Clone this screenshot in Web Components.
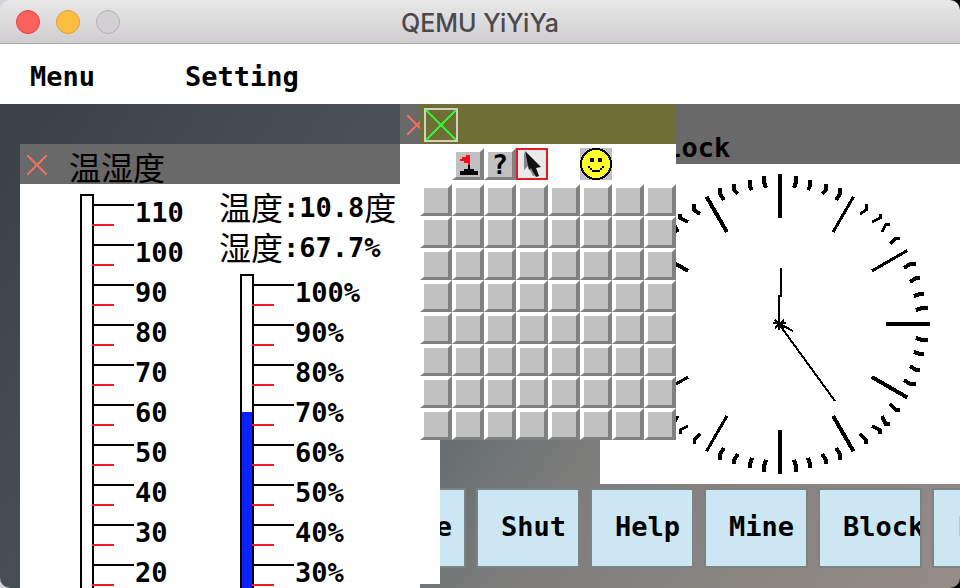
<!DOCTYPE html>
<html lang="zh">
<head>
<meta charset="utf-8">
<title>QEMU YiYiYa</title>
<style>
html, body { margin: 0; height: 100%; overflow: hidden; }
body {
  background: linear-gradient(90deg, #d4d4da 50%, #000 50%);
  font: bold 27px/40px "DejaVu Sans Mono", "Liberation Mono", "Noto Sans CJK SC", monospace;
  color: #000;
}
</style>
</head>
<body>
<vm-window></vm-window>
<script>
const define = (name, html, setup) => customElements.define(name, class extends HTMLElement {
  connectedCallback() {
    if (this.shadowRoot) return;
    const root = this.attachShadow({ mode: "open" });
    root.innerHTML = typeof html === "function" ? html(this) : html;
    if (setup) setup(root, this);
  }
});

define("title-bar", `
<style>
:host { display: grid; grid-template-columns: 1fr auto 1fr; align-items: center; height: 43px;
  background: linear-gradient(#e9e8e9, #cfcdcf); border-bottom: 1px solid #aaa8aa; }
.lights { display: flex; gap: 16px; padding-left: 16px; }
button { width: 24px; height: 24px; padding: 0; border-radius: 50%; border: 1px solid #e0443e; background: #fc615d; }
button.min { border-color: #dea034; background: #fdbd40; }
button.max { border-color: #b4b2b4; background: #d2d0d2; }
h1 { margin: 0; padding-top: 2px; font: 500 25px/30px Inter, Roboto, sans-serif; color: #4b494b; }
</style>
<div class="lights"><button aria-label="Close"></button><button class="min" aria-label="Minimize"></button><button class="max" aria-label="Zoom" disabled></button></div>
<h1><slot></slot></h1>`);

define("menu-bar", `
<style>
:host { display: block; background: #fff; }
nav { display: flex; gap: 90px; height: 60px; padding: 0 30px; align-items: center; }
button { all: unset; line-height: 32px; padding-top: 6px; }
</style>
<nav><button>Menu</button><button>Setting</button></nav>`);

define("desk-window", `
<style>
:host { display: flex; flex-direction: column; position: absolute; background: #fff; overflow: hidden; }
header { display: flex; align-items: center; height: 40px; padding-top: var(--lead, 0px); background: #696969; flex: none; }
button { all: unset; display: flex; width: 20px; padding: 2px 22px 0 7px; flex: none; }
svg { width: 20px; height: 20px; }
h2 { margin: 0; padding-top: 8px; font: inherit; line-height: 32px; white-space: nowrap; }
</style>
<header><button aria-label="Close"><svg viewBox="0 0 10 10" shape-rendering="crispEdges"><path d="M0 0L10 10M10 0L0 10" stroke="#e8705c" stroke-width="1"/></svg></button>
<h2><slot name="title"></slot></h2></header>
<slot></slot>`);

define("scale-meter", el => {
  const unit = el.getAttribute("unit") || "";
  let rows = "";
  for (let v = +el.getAttribute("max"); v >= +el.getAttribute("min"); v -= 10)
    rows += `<li><i></i><span>${v}${unit}</span></li>`;
  return `
<style>
:host { display: flex; }
.tube { width: 10px; border: 2px solid #000; background: linear-gradient(#fff var(--empty, 100%), #0a22ff 0); }
ul { list-style: none; margin: 0; padding: 0; }
li { display: flex; height: 40px; }
i { width: 40px; margin-right: 1px; border-top: 2px solid #000; margin-top: 10px; position: relative; }
i::after { content: ""; position: absolute; left: -2px; top: 18px; width: 22px; height: 2px; background: #ee1c2a; }
span { line-height: 38px; }
</style>
<div class="tube"></div><ul>${rows}</ul>`;
});

define("climate-panel", `
<style>
:host { display: grid; grid-template-columns: 139px 1fr; padding: 4px 0 0 60px; align-items: start; }
p { display: flex; margin: 0; height: 40px; line-height: 40px; white-space: nowrap; }
b { font: 400 32px/36px "Noto Sans CJK SC", sans-serif; }
.temp { margin-top: 6px; }
.humid { margin: 6px 0 0 21px; --empty: 136px; }
</style>
<scale-meter class="temp" max="110" min="20"></scale-meter>
<div><p><b>温度</b>:10.8<b>度</b></p><p><b>湿度</b>:67.7%</p>
<scale-meter class="humid" max="100" min="30" unit="%"></scale-meter></div>`);

define("mine-field", `
<style>
:host { display: block; position: absolute; background: #fff; }
header { height: 40px; background: #6f6e35; display: flex; box-sizing: border-box; padding: 4px; }
button { all: unset; box-sizing: border-box; width: 32px; height: 32px; background: #c0c0c0;
  border: 4px solid; border-color: #fff #808080 #808080 #fff; border-bottom-width: 3px; }
header button { width: 34px; height: 34px; border: 2px solid #cfd0c0; background: none; display: flex; }
header svg { width: 30px; height: 30px; }
.tools { display: flex; height: 40px; align-items: center; padding-left: 32px; }
.tools button { display: flex; }
.tools svg { width: 24px; height: 25px; }
.tools .pick { border: 2px solid #e01b24; background: #e9e9e9; }
.tools .pick svg { width: 28px; height: 28px; }
.tools .face { border: 0; margin-left: 32px; }
.tools .face svg { width: 32px; height: 32px; }
.q { font-size: 27px; line-height: 25px; justify-content: center; }
.grid { display: grid; grid-template-columns: repeat(8, 32px); }
</style>
<header><button aria-label="Close"><svg viewBox="0 0 15 15" shape-rendering="crispEdges"><path d="M0 0L15 15M15 0L0 15" stroke="#35f035"/></svg></button></header>
<div class="tools">
<button aria-label="Flag"><svg viewBox="0 0 24 25" shape-rendering="crispEdges"><path d="M4 7h2V5h4V3h4v10h-2v-2H8V9H4z" fill="#fa0a1e"/><path d="M12 13h2v4h4v2h4v4H4v-4h4v-2h4z"/></svg></button>
<button class="q" aria-label="Question mark">?</button>
<button class="pick" aria-label="Pointer"><svg viewBox="0 0 28 28"><path d="M6 2v18l4-4 5 10 3-1-4-10z" fill="#858585"/><path d="M7 1l16 16-5 1 3 8-3 1-5-9-2 2z" fill="#111"/></svg></button>
<button class="face" aria-label="New game"><svg viewBox="0 0 32 32" shape-rendering="crispEdges"><circle cx="16" cy="16" r="15" fill="#ffff2d" stroke="#000" stroke-width="2"/><path d="M10 10h4v4h-4zM18 10h4v4h-4zM8 18h2v2H8zM22 18h2v2h-2zM10 20h2v2h-2zM20 20h2v2h-2zM12 22h8v2h-8z"/></svg></button>
</div>
<div class="grid"></div>`, root => {
  root.querySelector(".grid").innerHTML = Array.from({ length: 64 }, (_, i) =>
    `<button aria-label="Row ${(i >> 3) + 1}, column ${i % 8 + 1}"></button>`).join("");
});

define("clock-face", () => {
  let ticks = "";
  for (let i = 0; i < 60; i++) {
    const a = i * Math.PI / 30, s = Math.sin(a), c = -Math.cos(a);
    const r0 = i % 5 ? 136 : 106, r1 = i % 5 ? 148 : i % 15 ? 147 : 150;
    const thin = (i > 4 && i < 11) || (i > 34 && i < 41);
    if (i % 5) {
      // Minor marks are steep near the top and bottom, flat at the sides, with a stepped inner end.
      const x1 = Math.round(s * r1 / 2) * 2, y1 = Math.round(c * r1 / 2) * 2;
      const x0 = Math.round(s * r0 / 2) * 2, y0 = Math.round(c * r0 / 2) * 2;
      const steep = Math.abs(c) > Math.abs(s);
      const mx = steep ? x1 : Math.round((x0 + x1) / 4) * 2;
      const my = steep ? Math.round((y0 + y1) / 4) * 2 : y1;
      ticks += `<path d="M${x0} ${y0}L${mx} ${my}L${x1} ${y1}" stroke-width="${thin ? 3 : 4}"/>`;
    } else {
      ticks += `<path d="M${s * r0} ${c * r0}L${s * r1} ${c * r1}" stroke-width="${thin ? 3 : 4}"/>`;
    }
  }
  return `
<style>
:host { display: block; }
svg { display: block; width: 320px; height: 320px; margin-left: 20px; }
</style>
<svg viewBox="-160 -160 320 320" shape-rendering="crispEdges" role="img" aria-label="Clock" stroke="#000" fill="none">${ticks}
<path d="M-1 0V-28H1V-56M-1 0L55 77M0 0L13 7M-7 -1H6M-1 -5V6M-5 -4L4 5M4 -4L-5 4" stroke-width="2"/></svg>`;
});

define("app-dock", `
<style>
:host { display: flex; gap: 10px; padding: 0 0 20px 362px; }
button { box-sizing: border-box; flex: none; width: 104px; height: 80px; padding: 0 0 2px 23px; border: 2px solid #7d8284;
  background: #cce7f3; font: inherit; color: inherit; text-align: left; overflow: hidden; white-space: nowrap; }
.end { padding: 0 12px 2px 0; text-align: right; }
</style>
<button class="end">e</button><button>Shut</button><button>Help</button><button>Mine</button><button>Block</button><button>L</button>`);

define("desk-top", `
<style>
:host { position: relative; display: flex; flex-direction: column; justify-content: flex-end; overflow: hidden;
  background: linear-gradient(125deg, #3b4046, #4b545a 36%, #6a7072 54%, #7f7e7c 66%, #948c87); }
.clock { left: 600px; right: 0; top: 0; height: 380px; --lead: 20px; }
.climate { left: 20px; top: 40px; width: 400px; height: 460px; }
.plain { left: 400px; top: 0; width: 40px; height: 480px; }
mine-field { left: 420px; top: 0; width: 256px; }
b { font: 400 32px/32px "Noto Sans CJK SC", sans-serif; }
</style>
<app-dock></app-dock>
<desk-window class="clock"><span slot="title">Clock</span><clock-face></clock-face></desk-window>
<desk-window class="climate"><b slot="title">温湿度</b><climate-panel></climate-panel></desk-window>
<desk-window class="plain"></desk-window>
<mine-field></mine-field>`);

define("vm-window", `
<style>
:host { display: flex; flex-direction: column; height: 100vh; border-radius: 10px; overflow: hidden; }
desk-top { flex: 1; }
</style>
<title-bar>QEMU YiYiYa</title-bar><menu-bar></menu-bar><desk-top></desk-top>`);
</script>
</body>
</html>
